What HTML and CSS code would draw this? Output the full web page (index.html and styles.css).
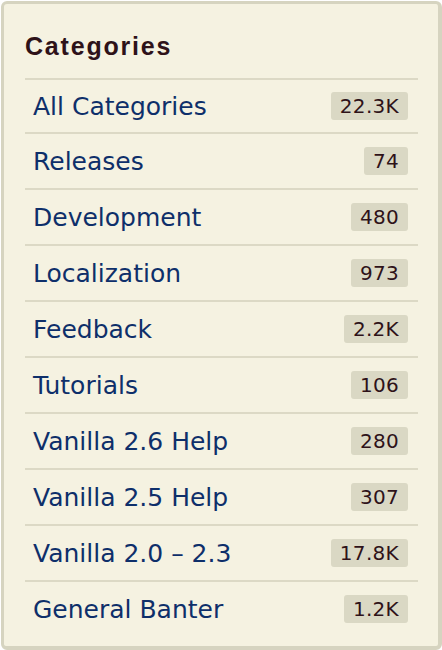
FILE: index.html
```html
<!DOCTYPE html>
<html lang="en">
<head>
<meta charset="utf-8">
<title>Categories</title>
<link rel="stylesheet" href="styles.css">
</head>
<body>
<div class="box">
  <h4 class="box-title">Categories</h4>
  <ul class="cat-list">
    <li class="cat-item"><a class="cat-link" href="#">All Categories</a><span class="count">22.3K</span></li>
    <li class="cat-item"><a class="cat-link" href="#">Releases</a><span class="count">74</span></li>
    <li class="cat-item"><a class="cat-link" href="#">Development</a><span class="count">480</span></li>
    <li class="cat-item"><a class="cat-link" href="#">Localization</a><span class="count">973</span></li>
    <li class="cat-item"><a class="cat-link" href="#">Feedback</a><span class="count">2.2K</span></li>
    <li class="cat-item"><a class="cat-link" href="#">Tutorials</a><span class="count">106</span></li>
    <li class="cat-item"><a class="cat-link" href="#">Vanilla 2.6 Help</a><span class="count">280</span></li>
    <li class="cat-item"><a class="cat-link" href="#">Vanilla 2.5 Help</a><span class="count">307</span></li>
    <li class="cat-item"><a class="cat-link" href="#">Vanilla 2.0 – 2.3</a><span class="count">17.8K</span></li>
    <li class="cat-item"><a class="cat-link" href="#">General Banter</a><span class="count">1.2K</span></li>
  </ul>
</div>
</body>
</html>
```
FILE: styles.css
```css
html, body {
  margin: 0;
  padding: 0;
  background: #ffffff;
}

.box {
  box-sizing: border-box;
  width: 441px;
  height: 649px;
  margin: 1px 0 0 1px;
  background: #f5f2e1;
  border: 3px solid #d6d4c0;
  border-right-width: 4px;
  border-bottom-width: 4px;
  border-radius: 6px;
  padding: 28px 20px 0 21px;
}

.box-title {
  margin: 0;
  padding: 0 0 18px 0;
  font-family: "Liberation Sans", Arial, sans-serif;
  font-weight: bold;
  font-size: 25px;
  line-height: 28px;
  letter-spacing: 1.8px;
  color: #2e1219;
}

.cat-list {
  list-style: none;
  margin: 0;
  padding: 0;
}

.cat-item {
  display: flex;
  align-items: center;
  justify-content: space-between;
  height: 54px;
  border-top: 2px solid #dcd9c5;
  padding: 0 10px 0 8px;
}

.cat-item:first-child {
  height: 52px;
}

.cat-link {
  font-family: "DejaVu Sans", Verdana, sans-serif;
  font-size: 25px;
  color: #0e2f6a;
  text-decoration: none;
}

.count {
  font-family: "DejaVu Sans", Verdana, sans-serif;
  font-size: 20px;
  line-height: 28px;
  letter-spacing: 0.3px;
  padding: 0 9px;
  background: #dad8c4;
  color: #2e1219;
  border-radius: 3px;
}
```
